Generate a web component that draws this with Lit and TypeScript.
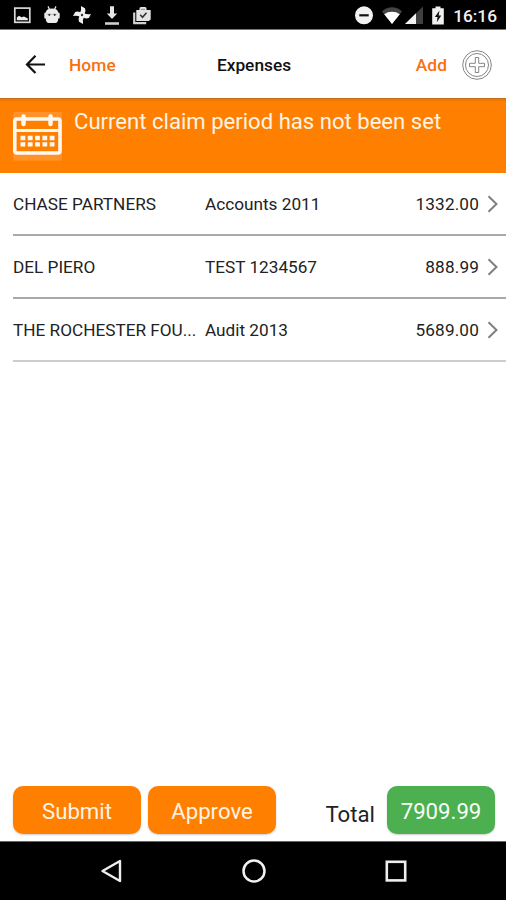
import { LitElement, html, css, svg } from "lit";
import { customElement, property } from "lit/decorators.js";

const blade = "M10 10.500 7.600 8.600Q8.900 5.500 7.400 1.300L11.800 2.800Q13.300 5 12.300 8.200z";

const glyphs: Record<string, unknown> = {
  image: svg`<rect x="2.800" y="3.100" width="15" height="14.200" fill="none" stroke="#d8d8d8" stroke-width="1.700"/><path d="M4.800 15.300V12.500L7 10.700l2.500 1.500 2.500-.8 3.800 2v1.900z" fill="#ececec"/>`,
  android: svg`<path d="M6 1.400 7.400 4.200M14 1.400 12.600 4.200" stroke="#e6e6e6" stroke-width="1.300"/><path d="M2.300 8.800Q2.300 7.600 3.800 7.600 4.300 3.400 10 3.400t6.200 4.200q1.500 0 1.500 1.200v3.600q0 1.200-1.500 1.200 0 4.400-3 4.400H6.800q-3 0-3-4.400-1.500 0-1.500-1.200z" fill="#ededed"/><path d="M4.300 9.300h11.400" stroke="#aaa" stroke-width=".7"/><circle cx="7.300" cy="9.800" r="1.100" fill="#333"/><circle cx="12.700" cy="9.800" r="1.100" fill="#333"/>`,
  pinwheel: svg`<g fill="#f0f0f0">${[10, 100, 190, 280].map((a) => svg`<path d=${blade} transform="rotate(${a} 10 10)"/>`)}</g><circle cx="10" cy="10" r="1.200" fill="#333"/>`,
  download: svg`<path d="M8 1.200h4v7.300h3.200L10 14 4.800 8.500H8z" fill="#e6e6e6"/><path d="M3 17.200h14v2.600H3z" fill="#cfcfcf"/>`,
  shop: svg`<path d="M2.200 7.500v10.700h12" fill="none" stroke="#d0d0d0" stroke-width="2.200"/><path d="M4.300 5h3.200V3.500Q7.500 2 9 2h4q1.500 0 1.500 1.500V5h4.200v9.500l-2 1.500H4.300z" fill="#e3e3e3"/><path d="M9 5V3.800h4V5z" fill="#999"/><path d="m8.200 9.800 2.300 2.400 4-4.500" fill="none" stroke="#333" stroke-width="1.600"/>`,
  dnd: svg`<circle cx="10" cy="10.300" r="9" fill="#f2f2f2"/><path d="M5.300 10.300h9.400" stroke="#111" stroke-width="2.200"/>`,
  wifi: svg`<path d="M10 19 0 6.500Q4.500 2.300 10 2.300T20 6.500z" fill="#444"/><path d="M10 19 2.200 9.200Q5.500 6.800 10 6.800t7.800 2.400z" fill="#fff"/>`,
  signal: svg`<path d="M1 19 19 1.500V19z" fill="#3f3f3f"/><path d="M1 19 12 8.300V19z" fill="#f2f2f2"/>`,
  battery: svg`<path d="M7.500 1.500h5v1.700h3.300v16.300H4.200V3.200h3.300z" fill="#f0f0f0"/><path d="M11.500 5.500 6.800 12h2.700l-.7 5.200L13.300 10.500h-2.600z" fill="#111"/>`,
};

const rows = [
  { client: "CHASE PARTNERS", job: "Accounts 2011", amount: "1332.00" },
  { client: "DEL PIERO", job: "TEST 1234567", amount: "888.99" },
  { client: "THE ROCHESTER FOU...", job: "Audit 2013", amount: "5689.00" },
];

@customElement("status-bar")
class StatusBar extends LitElement {
  static styles = css`
    :host { display: flex; justify-content: space-between; box-sizing: border-box; height: 30px; padding: 5px 9px 0 12px; background: #000; border-bottom: 1px solid #777; }
    .left, .right { display: flex; }
    .left { gap: 10px; }
    .right { gap: 3px; }
    .dnd { margin-right: 5px; }
    .wifi { margin-right: -1px; }
    .battery { margin-left: 1px; }
    svg { display: block; width: 20px; height: 20px; flex: none; }
    .time { font-size: 17.300px; line-height: 22px; font-weight: 500; color: #f2f2f2; margin-left: 2px; }
  `;
  icon(name: string) {
    return html`<svg class=${name} viewBox="0 0 20 20">${glyphs[name]}</svg>`;
  }
  render() {
    return html`
      <div class="left">${["image", "android", "pinwheel", "download", "shop"].map((n) => this.icon(n))}</div>
      <div class="right">${["dnd", "wifi", "signal", "battery"].map((n) => this.icon(n))}<span class="time">16:16</span></div>
    `;
  }
}

@customElement("expense-row")
class ExpenseRow extends LitElement {
  @property() client = "";
  @property() job = "";
  @property() amount = "";
  static styles = css`
    :host { display: grid; grid-template-columns: 184px 160px 1fr 12px; column-gap: 8px; align-items: center; box-sizing: border-box; height: 63px; margin-left: 13px; padding-right: 7px; border-bottom: 2px solid #a9a9a9; font-size: 17.200px; color: #222; }
    :host(:last-child) { border-bottom-color: #cdcdcd; }
    .client { white-space: nowrap; }
    .amount { text-align: right; letter-spacing: 0.150px; }
    svg { display: block; width: 12px; height: 18px; }
  `;
  render() {
    return html`
      <span class="client">${this.client}</span>
      <span class="job">${this.job}</span>
      <span class="amount">${this.amount}</span>
      <svg viewBox="0 0 12 18"><path d="m1.500 1.200 8 7.800-8 7.800" fill="none" stroke="#808080" stroke-width="2"/></svg>
    `;
  }
}

@customElement("app-root")
class AppRoot extends LitElement {
  static styles = css`
    :host { display: flex; flex-direction: column; height: 900px; background: #fff; font-family: Roboto, "Liberation Sans", sans-serif; overflow: hidden; }
    .header { display: grid; grid-template-columns: 1fr auto 1fr; align-items: center; box-sizing: border-box; height: 68px; padding: 2px 13px 0; font-size: 17.300px; font-weight: 500; }
    .side { display: flex; align-items: center; }
    .end { justify-content: flex-end; gap: 14px; }
    .back { width: 24px; height: 24px; margin: 0 22px 0 10px; }
    .link { color: #f9700d; letter-spacing: 0.100px; }
    .title { color: #111; margin-left: 2px; }
    .plus { width: 32px; height: 32px; }
    svg { display: block; flex: none; }
    .banner { display: flex; box-sizing: border-box; height: 75px; padding: 13px 12px 0; background: #ff8000; border-top: 1px solid #c96d17; box-shadow: inset 0 2px 1px #ec7803; color: #fff3e6; }
    .calendar { width: 51px; height: 50px; margin-right: 11px; }
    .notice { font-size: 22.100px; line-height: 26px; margin-top: -4px; white-space: nowrap; }
    .list { flex: 1; }
    .footer { display: flex; align-items: flex-start; box-sizing: border-box; height: 55px; padding: 0 11px 0 13px; font-size: 22.200px; line-height: 50px; }
    .button { width: 128px; height: 48px; margin-right: 7px; border-radius: 10px; text-align: center; background: #ff8000; color: #fff3e6; box-shadow: 0 1px 2px #ccc; }
    .label { margin: 3px 12px 0 auto; color: #222; }
    .total { width: 108px; height: 48px; border-radius: 10px; text-align: center; background: #4caf50; color: #f6fff6; box-shadow: 0 1px 2px #ccc; }
    .nav { display: flex; box-sizing: border-box; height: 59px; padding: 17px 98px 0 99px; justify-content: space-between; background: #000; border-top: 1px solid #666; }
    .nav svg { width: 24px; height: 24px; }
  `;
  render() {
    return html`
      <status-bar></status-bar>
      <div class="header">
        <div class="side">
          <svg class="back" viewBox="0 0 24 24"><path d="M22 11.500H4.500M12.500 2.800 4 11.500l8.500 8.500" fill="none" stroke="#111" stroke-width="2.200"/></svg>
          <span class="link">Home</span>
        </div>
        <span class="title">Expenses</span>
        <div class="side end">
          <span class="link">Add</span>
          <svg class="plus" viewBox="0 0 32 32" fill="none" stroke="#858585" stroke-width="1">
            <circle cx="16" cy="16" r="14.300"/><circle cx="16" cy="16" r="11.500"/>
            <path d="M14.300 8.500h3.400v5.800h5.800v3.400h-5.800v5.800h-3.400v-5.800H8.500v-3.400h5.800z"/>
          </svg>
        </div>
      </div>
      <div class="banner">
        <svg class="calendar" viewBox="0 0 51 50">
          <rect x="1" y="0" width="49" height="48.500" fill="#ff932a"/>
          <rect x="2.800" y="7" width="45.200" height="34" rx="2" fill="#ff8000" stroke="#fff8f0" stroke-width="3.600"/>
          <path d="M2 18.500h46" stroke="#fff8f0" stroke-width="2.800"/>
          <path d="M11.500 4.500v7.500M38.500 4.500v7.500" stroke="#fff8f0" stroke-width="4.500" stroke-linecap="round"/>
          <path d="M8.500 26h34M8.500 32.300h34" stroke="#fff8f0" stroke-width="4.300" stroke-dasharray="4.800 2.500"/>
        </svg>
        <span class="notice">Current claim period has not been set</span>
      </div>
      <div class="list">
        ${rows.map((r) => html`<expense-row .client=${r.client} .job=${r.job} .amount=${r.amount}></expense-row>`)}
      </div>
      <div class="footer">
        <div class="button">Submit</div>
        <div class="button">Approve</div>
        <span class="label">Total</span>
        <div class="total">7909.99</div>
      </div>
      <div class="nav">
        <svg viewBox="0 0 24 24"><path d="M21 2v20L3.500 12z" fill="none" stroke="#eee" stroke-width="2.400" stroke-linejoin="round"/></svg>
        <svg viewBox="0 0 24 24"><circle cx="12" cy="12" r="10.500" fill="none" stroke="#f2f2f2" stroke-width="2.500"/></svg>
        <svg viewBox="0 0 24 24"><rect x="2.800" y="2.800" width="18.400" height="18.600" fill="none" stroke="#eee" stroke-width="2.600"/></svg>
      </div>
    `;
  }
}
